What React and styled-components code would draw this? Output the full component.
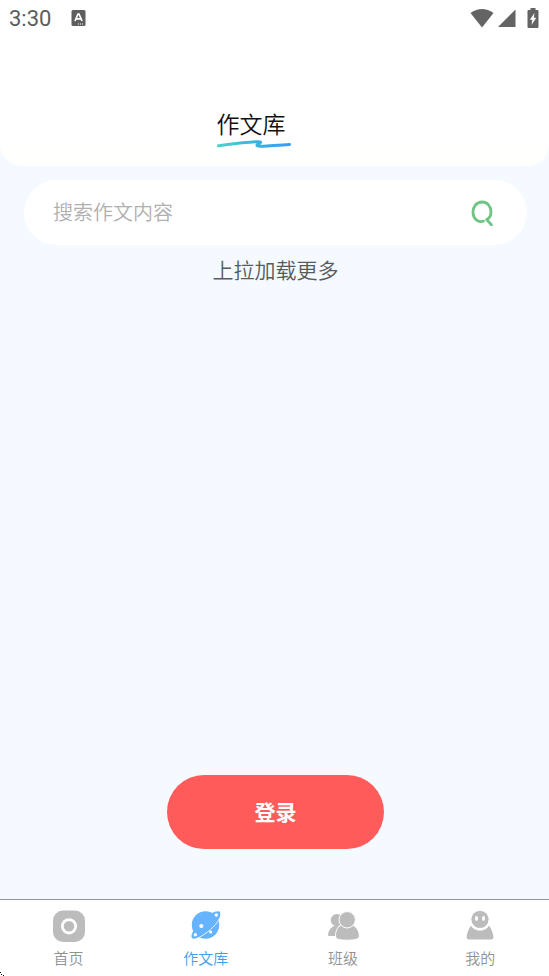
import React from "react";
import styled, { createGlobalStyle } from "styled-components";

const GlobalStyle = createGlobalStyle`
  *, *::before, *::after { box-sizing: border-box; }
  body {
    margin: 0;
    background: #f4faff;
    font-family: "Noto Sans CJK SC", "Noto Sans", sans-serif;
  }
  button, input { font: inherit; }
`;

const Screen = styled.div`
  display: flex;
  flex-direction: column;
  min-height: 100vh;
  background: #f4faff;
`;

const Header = styled.header`
  background: linear-gradient(#ffffff 84%, #fffffc);
  border-radius: 0 0 22px 22px;
  padding-bottom: 18px;
`;

const StatusBar = styled.div`
  display: flex;
  align-items: center;
  height: 36px;
  padding: 0 10px 0 9px;
  color: #5c5c5c;
`;

const Clock = styled.time`
  padding-top: 2px;
  font-family: Roboto, sans-serif;
  font-size: 22px;
  font-weight: 400;
  line-height: 36px;
  margin-right: 20px;
`;

const StatusIcons = styled.div`
  display: flex;
  align-items: center;
  gap: 4px;
  margin-left: auto;

  svg:last-child { margin-left: 7px; }
`;

const TitleRow = styled.div`
  display: flex;
  justify-content: center;
  padding: 70px 42px 0 0;
`;

const TitleBlock = styled.div`
  display: flex;
  flex-direction: column;
`;

const Title = styled.h1`
  margin: 0;
  font-size: 23px;
  line-height: 34px;
  font-weight: 350;
  color: #111111;
  white-space: nowrap;
`;

const SearchForm = styled.form`
  display: flex;
  align-items: center;
  height: 65px;
  margin: 14px 22px 0 24px;
  padding: 0 31px 2px 29px;
  border-radius: 33px;
  background: #ffffff;
`;

const SearchInput = styled.input`
  flex: 1;
  min-width: 0;
  height: 32px;
  padding: 0;
  border: 0;
  outline: 0;
  background: transparent;
  font-size: 20px;
  font-weight: 350;
  color: #333333;

  &::placeholder { color: #b0b0b0; opacity: 1; }
`;

const IconButton = styled.button`
  display: flex;
  padding: 0;
  border: 0;
  background: none;
  cursor: pointer;
`;

const Content = styled.main`
  display: flex;
  flex: 1;
  flex-direction: column;
  align-items: center;
  justify-content: space-between;
  padding: 9px 0 50px 2px;
`;

const LoadMore = styled.p`
  margin: 0;
  font-size: 21px;
  line-height: 30px;
  font-weight: 350;
  color: #58595c;
`;

const LoginButton = styled.button`
  width: 217px;
  height: 74px;
  padding: 0 0 2px;
  border: 0;
  border-radius: 37px;
  background: #ff5b5b;
  color: #ffffff;
  font-size: 21px;
  font-weight: 700;
  cursor: pointer;
`;

const TabBar = styled.nav`
  display: grid;
  grid-template-columns: repeat(4, 1fr);
  height: 77px;
  border-top: 1px solid #929496;
  background: #ffffff;
`;

const TabLink = styled.a`
  display: flex;
  flex-direction: column;
  align-items: center;
  padding-top: 10px;
  gap: 2px;
  font-size: 15px;
  line-height: 24px;
  font-weight: 350;
  color: ${({ $active }) => ($active ? "#419eee" : "#929292")};
  text-decoration: none;
`;

const CornerMark = styled.svg`
  position: fixed;
  left: 0;
  bottom: 0;
`;

const HomeIcon = () => (
  <svg width="34" height="34" viewBox="0 0 34 34" aria-hidden="true">
    <rect x="1" y="0.5" width="32" height="31.5" rx="10" fill="#bcbcbc" />
    <circle cx="17" cy="16.3" r="6.7" fill="none" stroke="#fff" strokeWidth="2.8" />
  </svg>
);

const PlanetIcon = () => (
  <svg width="34" height="34" viewBox="0 0 34 34" aria-hidden="true">
    <circle cx="16.5" cy="15" r="13.7" fill="#66b3ff" />
    <path
      d="M22 3.5C26 1.5 30 0.7 31 2C33 7 26 16 18 22C11 27 5 30 3 28C1.6 26 3 23 5 20Z"
      fill="#66b3ff"
    />
    <path d="M30.2 9C26 17 18 23 9.5 27.8" fill="none" stroke="#e6f3ff" strokeWidth="1" />
    <circle cx="12.3" cy="16" r="2.1" fill="#fff" />
    <circle cx="21.7" cy="22" r="1.5" fill="#fff" />
    <circle cx="27.3" cy="5" r="1.7" fill="#fff" />
    <circle cx="6.3" cy="24.8" r="1.7" fill="#fff" />
  </svg>
);

const ClassIcon = () => (
  <svg width="34" height="34" viewBox="0 0 34 34" aria-hidden="true">
    <g fill="#bcbcbc">
      <circle cx="11" cy="10.2" r="6.2" />
      <path d="M2.2 26C1.7 21 4.5 18 8.5 15.5L14 17L10 26Z" />
    </g>
    <g fill="#bcbcbc" stroke="#fff" strokeWidth="1">
      <path d="M14.5 15.5H27.5C31 17.5 33.8 22 33.2 27Q32.8 30.2 21.2 30.2T9.6 27C9.2 22 11 17.5 14.5 15.5Z" />
      <circle cx="21.2" cy="9.8" r="8.2" />
    </g>
  </svg>
);

const ProfileIcon = () => (
  <svg width="34" height="34" viewBox="0 0 34 34" aria-hidden="true">
    <path
      d="M9 14.5C6 17.5 4.5 22 3.8 25.5Q3 29.5 6 29.5H28Q31 29.5 30.3 25.5C29.5 22 28 17.5 25 14.5Z"
      fill="#bcbcbc"
    />
    <circle cx="17" cy="10.2" r="10.6" fill="#fff" />
    <circle cx="17" cy="9.3" r="8.6" fill="#bcbcbc" />
    <ellipse cx="13.5" cy="8.5" rx="1.5" ry="2.4" fill="#fff" />
    <ellipse cx="20.5" cy="8.5" rx="1.5" ry="2.4" fill="#fff" />
  </svg>
);

const tabs = [
  { label: "首页", href: "#home", Icon: HomeIcon },
  { label: "作文库", href: "#library", Icon: PlanetIcon, active: true },
  { label: "班级", href: "#class", Icon: ClassIcon },
  { label: "我的", href: "#me", Icon: ProfileIcon },
];

export default function App() {
  return (
    <>
      <GlobalStyle />
      <Screen>
        <Header>
          <StatusBar>
            <Clock>3:30</Clock>
            <svg width="15" height="16" viewBox="0 0 15 16" aria-hidden="true">
              <rect x="0.5" width="14" height="16" rx="1.5" fill="#5e5e5e" />
              <path
                d="M4 11L7 4H8L11 11M5 8.8H10"
                fill="none"
                stroke="#fff"
                strokeWidth="1.7"
              />
              <path d="M7 14H13" stroke="#fff" strokeWidth="1" strokeDasharray="1 1" />
            </svg>
            <StatusIcons aria-hidden="true">
              <svg width="24" height="20" viewBox="0 0 24 20">
                <path d="M0.5 5Q12 -3 23.5 5L12 19.5Z" fill="#646464" />
              </svg>
              <svg width="18" height="18" viewBox="0 0 18 18">
                <path d="M17.5 0.5V18H0Z" fill="#646464" />
              </svg>
              <svg width="12" height="20" viewBox="0 0 12 20">
                <path
                  d="M3.5 0H8.5V2H10.5Q11.5 2 11.5 3V19Q11.5 20 10.5 20H1.5Q0.5 20 0.5 19V3Q0.5 2 1.5 2H3.5Z"
                  fill="#646464"
                />
                <path d="M7.5 5L2.8 11.8H5.3L4.5 17L9.3 9.8H6.8Z" fill="#fff" />
              </svg>
            </StatusIcons>
          </StatusBar>
          <TitleRow>
            <TitleBlock>
              <Title>作文库</Title>
              <svg width="74" height="8" viewBox="0 0 74 8" aria-hidden="true">
                <defs>
                  <linearGradient id="brush" gradientUnits="userSpaceOnUse" x1="0" y1="0" x2="74" y2="0">
                    <stop offset="0" stopColor="#4ad5ca" />
                    <stop offset="0.6" stopColor="#37afe1" />
                    <stop offset="1" stopColor="#3c99f7" />
                  </linearGradient>
                </defs>
                <path
                  d="M1.5 5.8C15 4 28 2 41 1.7C48 1.8 39 4.5 40 5.5C43 7.7 56 5.2 72.5 4.4"
                  fill="none"
                  stroke="url(#brush)"
                  strokeWidth="3"
                  strokeLinecap="round"
                  strokeLinejoin="round"
                />
              </svg>
            </TitleBlock>
          </TitleRow>
        </Header>

        <SearchForm role="search" onSubmit={(event) => event.preventDefault()}>
          <SearchInput type="text" placeholder="搜索作文内容" aria-label="搜索作文内容" />
          <IconButton type="submit" aria-label="搜索">
            <svg width="28" height="28" viewBox="0 0 28 28" aria-hidden="true">
              <path
                d="M15.5 23.2C9.5 24.9 5 20.2 5 14.3C5 8.6 8.6 4 14 4C19.3 4 23 8.4 23 13.7C23 17.5 21.5 20.2 18.6 21.5L23.4 26.8"
                fill="none"
                stroke="#70c486"
                strokeWidth="2.8"
                strokeLinejoin="round"
                strokeLinecap="round"
              />
            </svg>
          </IconButton>
        </SearchForm>

        <Content>
          <LoadMore>上拉加载更多</LoadMore>
          <LoginButton type="button">登录</LoginButton>
        </Content>

        <TabBar aria-label="主导航">
          {tabs.map(({ label, href, Icon, active }) => (
            <TabLink
              key={href}
              href={href}
              $active={active}
              aria-current={active ? "page" : undefined}
            >
              <Icon />
              {label}
            </TabLink>
          ))}
        </TabBar>
      </Screen>
      <CornerMark width="4" height="4" viewBox="0 0 4 4" aria-hidden="true">
        <path d="M0 0H1V1H0ZM1 2H2V3H1ZM3 3H4V4H3Z" fill="#111" />
      </CornerMark>
    </>
  );
}
